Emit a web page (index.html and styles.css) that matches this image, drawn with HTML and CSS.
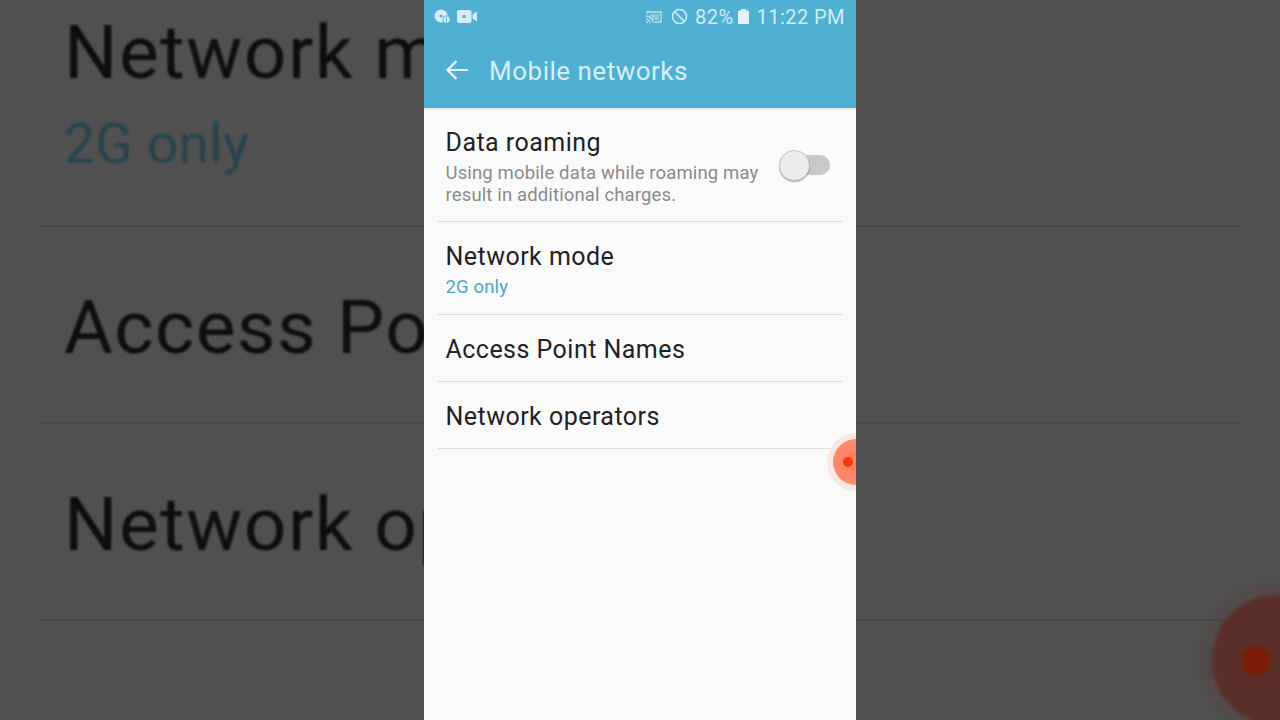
FILE: index.html
```html
<!DOCTYPE html>
<html lang="en">
<head>
<meta charset="utf-8">
<title>Mobile networks</title>
<link rel="stylesheet" href="styles.css">
</head>
<body>
<div class="stage">
  <aside class="side side-left">
    <div class="back-rows">
      <div class="back-row back-row-first">
        <div class="back-title">Network mode</div>
        <div class="back-sub">2G only</div>
      </div>
      <div class="back-row back-row-single">
        <div class="back-title">Access Point Names</div>
      </div>
      <div class="back-row back-row-single">
        <div class="back-title">Network operators</div>
      </div>
    </div>
  </aside>

  <main class="phone">
    <header class="appbar">
      <div class="status">
        <div class="status-left">
          <svg class="ic" width="17" height="15" viewBox="0 0 17 15"><circle cx="7" cy="7" r="6.5" fill="#d4edf6"/><circle cx="7" cy="7" r="1.6" fill="#4fb0d3"/><circle cx="12.5" cy="10.5" r="4" fill="#4fb0d3"/><circle cx="12.5" cy="10.5" r="3.2" fill="#d4edf6"/><rect x="12" y="8.5" width="1" height="4" fill="#4fb0d3"/></svg>
          <svg class="ic" width="20" height="13" viewBox="0 0 20 13"><rect x="0" y="0" width="14.5" height="13" rx="2" fill="#d4edf6"/><circle cx="7.2" cy="6.5" r="1.7" fill="#4fb0d3"/><path d="M15.5 4.5 20 1.5v10l-4.500-3z" fill="#d4edf6"/></svg>
        </div>
        <div class="status-right">
          <svg class="ic ic-cast" width="16" height="12" viewBox="0 0 16 12"><path d="M1 3V1h14v10H8" fill="none" stroke="#b9e0ee" stroke-width="1.300"/><rect x="4" y="3" width="9" height="6" fill="#b9e0ee" opacity=".6"/><path d="M0 5a7 7 0 0 1 7 7M0 8a4 4 0 0 1 4 4" fill="none" stroke="#b9e0ee" stroke-width="1.300"/><circle cx="1" cy="11" r="1" fill="#b9e0ee"/></svg>
          <svg class="ic ic-block" width="17" height="17" viewBox="0 0 17 17"><circle cx="8.500" cy="8.500" r="7" fill="none" stroke="#d4edf6" stroke-width="1.600"/><path d="M3.700 3.700 13.300 13.300" stroke="#d4edf6" stroke-width="1.600"/></svg>
          <span class="status-text pct">82%</span>
          <svg class="ic ic-batt" width="11" height="15" viewBox="0 0 11 15"><rect x="3" y="0" width="5" height="2" fill="#d4edf6"/><rect x="0" y="1.500" width="11" height="13.500" rx="1" fill="#e4f3f8"/></svg>
          <span class="status-text time">11:22 PM</span>
        </div>
      </div>
      <div class="toolbar">
        <svg class="back-arrow" width="24" height="22" viewBox="0 0 24 22"><path d="M23 11H3M11.500 2 2.500 11l9 9" fill="none" stroke="#eaf6fa" stroke-width="2.200"/></svg>
        <h1 class="title">Mobile networks</h1>
      </div>
    </header>

    <section class="list">
      <div class="row row-switch">
        <div class="row-text">
          <div class="row-title">Data roaming</div>
          <div class="row-desc">Using mobile data while roaming may result in additional charges.</div>
        </div>
        <div class="switch"><span class="knob"></span></div>
      </div>
      <div class="row row-mode">
        <div class="row-title">Network mode</div>
        <div class="row-value">2G only</div>
      </div>
      <div class="row row-plain">
        <div class="row-title">Access Point Names</div>
      </div>
      <div class="row row-plain">
        <div class="row-title">Network operators</div>
      </div>
    </section>

    <div class="touch"><span class="touch-core"><span class="touch-dot"></span></span></div>
  </main>

  <aside class="side side-right">
    <div class="back-rows">
      <div class="back-row back-row-first"></div>
      <div class="back-row back-row-single"></div>
      <div class="back-row back-row-single"></div>
    </div>
    <div class="blob"><span class="blob-dot"></span></div>
  </aside>
</div>
</body>
</html>
```

FILE: styles.css
```css
* { box-sizing: border-box; }
html, body { margin: 0; height: 100%; }
body { background: #505050; font-family: Roboto, "Liberation Sans", sans-serif; overflow: hidden; }

.stage { display: grid; grid-template-columns: 424px 432px 424px; width: 1280px; height: 720px; }

/* blurred, dimmed backdrop */
.side { position: relative; overflow: hidden; background: #505050; height: 720px; }
.back-rows { display: flex; flex-direction: column; }
.side-left .back-rows { margin-left: 40px; width: 1200px; }
.side-right .back-rows { margin-left: -816px; width: 1200px; }
.back-row { border-bottom: 2px solid #484848; padding-left: 24px; white-space: nowrap; }
.back-row-first { height: 227px; padding-top: 7px; }
.back-row-single { height: 197px; padding-top: 55px; }
.back-title { font-size: 75px; line-height: 90px; letter-spacing: 1.4px; color: #0e0e0e; filter: blur(1px); }
.back-sub { font-size: 55px; line-height: 62px; margin-top: 16px; letter-spacing: .3px; color: #274450; filter: blur(1.2px); }

.blob { position: absolute; left: 356px; top: 595px; width: 130px; height: 130px; border-radius: 50%; background: #5a2f28; box-shadow: 0 0 0 14px rgba(90, 64, 58, .3); filter: blur(2px); }
.blob-dot { position: absolute; left: 29px; top: 51px; width: 30px; height: 30px; border-radius: 50%; background: #7a1c06; }

/* phone column */
.phone { position: relative; overflow: hidden; background: #fafafa; height: 720px; }
.appbar { height: 108px; background: #4fb0d3; box-shadow: 0 1px 2px rgba(0, 0, 0, .12); }
.status { height: 33px; display: flex; justify-content: space-between; align-items: center; padding: 0 11px 0 10px; }
.status-left, .status-right { display: flex; align-items: center; }
.status-left { gap: 6px; }
.ic { display: block; }
.ic-block { margin-left: 9px; }
.status-text { color: #d4edf6; font-size: 20px; line-height: 24px; letter-spacing: .45px; }
.pct { margin-left: 7px; }
.ic-batt { margin-left: 4px; }
.time { margin-left: 8px; }
.toolbar { height: 75px; display: flex; align-items: center; padding: 0 0 0 21px; }
.back-arrow { display: block; margin-top: -1px; }
.title { margin: 0 0 0 20px; font-size: 26px; font-weight: 400; line-height: 32px; letter-spacing: .5px; color: #d6f0f9; }

.list { display: flex; flex-direction: column; }
.row { position: relative; padding-left: 21.500px; }
.row::after { content: ""; position: absolute; left: 14px; right: 14px; bottom: 0; height: 1px; background: #dcdcdc; }
.row-switch { height: 114px; padding-top: 19px; display: flex; }
.row-text { width: 322.500px; }
.row-title { font-size: 25px; line-height: 32px; letter-spacing: .47px; color: #222222; white-space: nowrap; }
.row-desc { font-size: 18.500px; line-height: 22px; letter-spacing: .14px; color: #8a8a8a; margin-top: 3px; }
.row-mode { height: 93px; padding-top: 19px; }
.row-value { font-size: 18.500px; line-height: 22px; letter-spacing: .14px; color: #4ea6c4; margin-top: 3px; }
.row-plain { height: 67px; padding-top: 19px; }

.switch { position: relative; margin: 28px 0 0 11px; width: 51px; height: 20px; }
.switch::before { content: ""; position: absolute; left: 8px; right: 0; top: 0; height: 20px; border-radius: 10px; background: #c9c9c9; }
.knob { position: absolute; left: 0; top: -5px; width: 31px; height: 31px; border-radius: 50%; background: #ececec; border: 1px solid #c4c4c4; box-shadow: 0 1px 1px rgba(0, 0, 0, .3); }

.touch { position: absolute; left: 403px; top: 433px; width: 58px; height: 58px; border-radius: 50%; background: #fbe6e0; }
.touch-core { position: absolute; left: 6px; top: 6px; width: 46px; height: 46px; border-radius: 50%; background: radial-gradient(circle at 40% 50%, #ff7d5c, #ff9478); }
.touch-dot { position: absolute; left: 10px; top: 18px; width: 10px; height: 10px; border-radius: 50%; background: #f23c05; }
```
